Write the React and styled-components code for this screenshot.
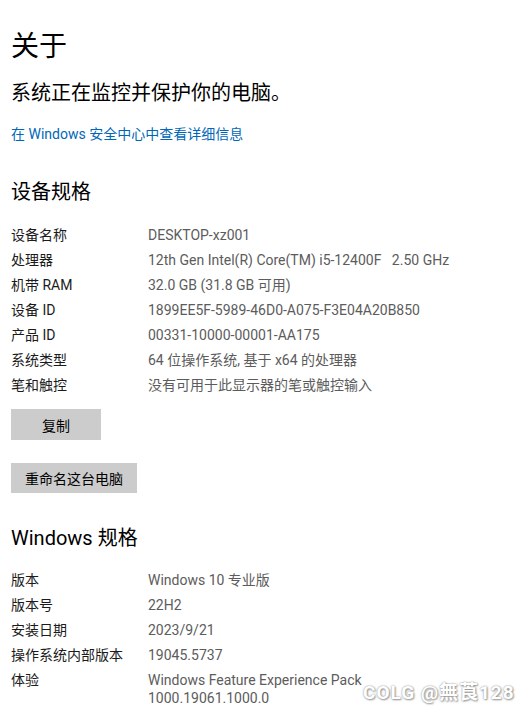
import React from 'react';
import styled, { createGlobalStyle } from 'styled-components';

const GlobalStyle = createGlobalStyle`
  html, body {
    margin: 0;
    padding: 0;
    background: #ffffff;
  }
  body {
    font-family: Roboto, 'Noto Sans CJK SC', sans-serif;
    color: #1b1b1b;
  }
`;

const Page = styled.div`
  position: relative;
  width: 523px;
  height: 721px;
  overflow: hidden;
  padding: 29px 0 0 11px;
  box-sizing: border-box;
`;

const Title = styled.h1`
  margin: 0;
  font-size: 28px;
  line-height: 36px;
  font-weight: 400;
  color: #000;
`;

const Subtitle = styled.p`
  margin: 14px 0 0;
  font-size: 20px;
  line-height: 28px;
  color: #000;
`;

const Link = styled.a`
  display: block;
  margin-top: 17px;
  font-size: 14px;
  line-height: 20px;
  color: #0067b8;
  text-decoration: none;
  cursor: pointer;
`;

const Heading = styled.h2`
  margin: ${(p) => p.top}px 0 0;
  font-size: 20px;
  line-height: 28px;
  font-weight: 400;
  color: #000;
`;

const SpecList = styled.dl`
  margin: ${(p) => p.top}px 0 0;
  display: grid;
  grid-template-columns: 137px 1fr;
  row-gap: 7px;
  font-size: 14px;
  line-height: 18px;
`;

const Label = styled.dt`
  margin: 0;
  color: #1b1b1b;
`;

const Value = styled.dd`
  margin: 0;
  color: #5c5c5c;
  white-space: pre-wrap;
`;

const Button = styled.button`
  display: block;
  margin-top: ${(p) => p.top}px;
  width: ${(p) => p.w}px;
  height: ${(p) => p.h}px;
  padding: 0;
  border: none;
  background: #cccccc;
  font-family: inherit;
  font-size: 14px;
  color: #000;
  cursor: pointer;
`;

const Watermark = styled.div`
  position: absolute;
  left: 363px;
  top: 681px;
  font-size: 19px;
  line-height: 24px;
  font-weight: 700;
  color: #ffffff;
  letter-spacing: 1px;
  text-shadow: 0 0 2px #8a8a8a, 1px 1px 2px #9a9a9a;
  white-space: nowrap;
`;

const deviceSpecs = [
  ['设备名称', 'DESKTOP-xz001'],
  ['处理器', '12th Gen Intel(R) Core(TM) i5-12400F   2.50 GHz'],
  ['机带 RAM', '32.0 GB (31.8 GB 可用)'],
  ['设备 ID', '1899EE5F-5989-46D0-A075-F3E04A20B850'],
  ['产品 ID', '00331-10000-00001-AA175'],
  ['系统类型', '64 位操作系统, 基于 x64 的处理器'],
  ['笔和触控', '没有可用于此显示器的笔或触控输入'],
];

const windowsSpecs = [
  ['版本', 'Windows 10 专业版'],
  ['版本号', '22H2'],
  ['安装日期', '2023/9/21'],
  ['操作系统内部版本', '19045.5737'],
  ['体验', 'Windows Feature Experience Pack\n1000.19061.1000.0'],
];

const Specs = ({ items, top }) => (
  <SpecList top={top}>
    {items.map(([k, v]) => (
      <React.Fragment key={k}>
        <Label>{k}</Label>
        <Value>{v}</Value>
      </React.Fragment>
    ))}
  </SpecList>
);

const App = () => {
  return (
    <Page>
      <GlobalStyle />
      <Title>关于</Title>
      <Subtitle>系统正在监控并保护你的电脑。</Subtitle>
      <Link>在 Windows 安全中心中查看详细信息</Link>

      <Heading top={34}>设备规格</Heading>
      <Specs items={deviceSpecs} top={20} />
      <Button top={15} w={90} h={31}>复制</Button>
      <Button top={23} w={126} h={30}>重命名这台电脑</Button>

      <Heading top={31}>Windows 规格</Heading>
      <Specs items={windowsSpecs} top={19} />

      <Watermark>COLG @無莨128</Watermark>
    </Page>
  );
};

export default App;
